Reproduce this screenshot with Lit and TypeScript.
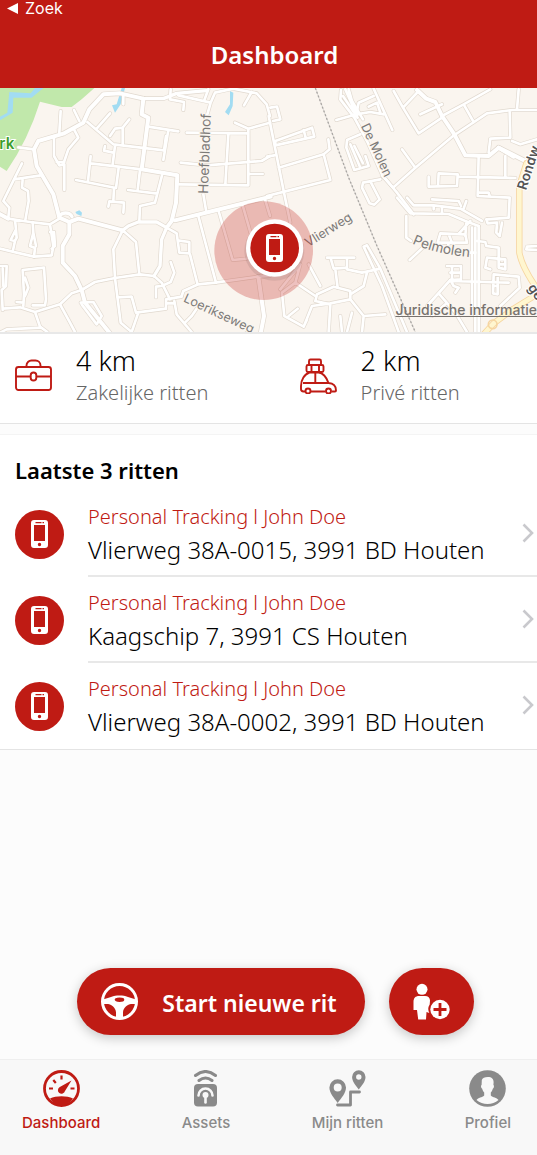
import { LitElement, html, css, svg } from "lit";
import { customElement, property } from "lit/decorators.js";

const RED = "#bf1b14";

// Street geometry, in map units. "East" paths belong to the eastern half of the town.
const minorWest = [
  "M182 75 L178 140 M162 150 L162 210 L178 238 L193 235 L193 312 M170 228 H193 M193 225 L205 190 L235 155 L222 130 M222 72 L238 105",
  "M330 82 L290 128 M262 108 L340 175 L492 193 M330 150 L345 128 L368 125 L388 100 M368 125 L368 175 M345 180 L338 235 M340 200 L312 194 L315 180",
  "M445 122 L535 136 M505 132 L490 222 M492 193 L498 150",
  "M425 250 L272 232 M272 210 L264 285 M228 282 L348 306 L356 245 M342 306 L340 345 M325 362 L328 346 L372 350 L370 380",
  "M413 312 L420 252 M384 312 L472 323 L486 268 M472 323 L465 350 L420 360 L418 405",
  "M66 232 L42 280 L10 345 L28 365 L25 395 M42 280 L122 268 M68 280 L66 305 L84 315 L86 345 L76 402",
  "M25 398 L90 408 L150 415 L178 398 M45 402 L48 430 L32 462 L45 465 L38 497 M48 430 L50 455 L45 465 M0 488 L50 500 L102 512 L155 508 L160 480 L150 415 M150 438 H162 L165 480 L155 488",
  "M98 408 L100 440 L90 480 L105 486 L102 512 M100 440 L108 480",
  "M0 540 H20 L18 600 L5 612 L8 672 M8 548 L10 600 M0 740 L20 730 L120 725 M8 668 L60 664 L105 678 L180 655 L215 622 L245 612 M105 678 L120 722 L142 738",
  "M70 660 L72 625 L68 552 L132 545 L138 640 L135 658 L98 658 M75 575 L85 605 L75 630 M50 648 L70 650 M180 655 L208 706 L225 738",
  "M242 650 L280 648 L305 690 L290 715 L245 655 M245 612 L285 588 L345 576 L420 565 L462 570 L485 590 L510 640",
  "M368 433 L340 490 L345 576 L362 710 L395 738 M368 433 L408 468 L418 565 M352 634 L395 632 L408 680 L498 668 L498 640 L545 632 M415 680 L395 738 M498 652 H520 M523 645 L530 685 L575 738 M555 710 L575 690 L590 668",
  "M545 630 L550 615 L595 595 L645 590 L775 572 L810 570 M468 634 L468 602 L485 600 L512 588 L523 560 L512 528",
  "M500 425 L530 442 L538 500 L568 502 L568 468 L538 464 M570 505 L592 592 M595 390 L640 560 L648 590 M655 372 L698 522 L740 518 M728 358 L760 470 M795 340 L810 390",
  "M538 295 L745 298 L745 128 L705 110 M560 140 L745 142 M745 128 L810 110 M685 145 L676 295 M542 230 L620 238 L785 225 L810 210 M745 264 H788 M610 325 L618 372",
  "M512 10 L510 40 L552 48 L550 72 M535 28 L632 50 L622 85 M612 45 L625 10 M632 50 L645 20 L700 8 L770 22 L800 55 L810 90 M732 58 L755 18 M55 184 L102 190 M370 28 V55",
];
const minorEast = [
  "M10 65 L30 62 L40 100 L18 105 M5 90 L52 325 L70 410 M0 212 L22 208 M35 245 L170 205 M25 165 L135 125 L142 152 L25 178 Z M110 132 L116 155",
  "M0 330 L55 316 L190 282 L170 205 L188 190 L184 160",
  "M208 102 L268 85 L310 78 L350 85 M268 85 L275 50 L320 30 M305 62 L330 50 L340 80 M320 8 L376 132 M380 15 L408 65 L455 142 L525 95 M408 65 L455 15",
  "M222 12 L220 40 L262 95 L300 165 L345 265 L390 320 L440 385 M245 10 L255 45 L288 100 M228 30 L272 95 M235 10 L270 88",
  "M280 145 L240 162 L238 185 L262 252 L305 240 L295 210 M262 180 L288 232 M250 175 L280 245",
  "M405 190 L445 245 L558 150 L660 82 L735 72 L810 72 M445 245 L378 305 L345 268 M340 280 L288 290 L285 305 L308 352 L322 356 L338 340 L312 290 M390 335 L430 382 L545 384 L595 405 L635 420",
  "M460 85 L525 55 M525 90 L590 55 L670 10 M590 55 L620 108 M755 10 L750 70 M728 78 L730 155 L670 158 L665 200",
  "M420 335 L440 358 L500 358 L580 368 L645 405 M500 370 L500 358 M525 384 L525 362 M495 340 L575 345 L582 360 M598 345 L590 368",
  "M485 272 V302 L570 300 L572 265 L515 262 L513 300 M572 272 L745 276 M635 210 L632 330 L728 335 L725 395 L662 400 M632 320 H665 L668 330 M715 210 V272",
  "M418 390 V455 L432 465 M428 522 L475 478 M590 445 L520 442 L512 470 L600 470 L595 445 M598 412 L595 450 M545 445 L555 470 M578 440 L610 405 M545 470 L540 500 M605 500 H625",
  "M658 400 L662 412 L690 410 L688 440 L698 450 L705 410 M630 465 L655 468 L658 480 L695 485 L695 545 L715 550 L715 520 L660 515 L655 545 L670 550 M700 535 H715",
  "M540 540 H582 V580 L550 582 L560 600 L575 605 L565 620 M555 540 V580 M550 560 H582 M550 585 L725 590 M680 565 L755 572 L758 605 L700 660 M680 565 L678 622 L692 625 L692 568 M680 600 H692",
  "M550 582 L480 660 M515 622 L565 680 L600 738 M495 690 L535 655 M810 480 L780 482 L778 490 L810 492",
  "M180 515 L262 515 M192 520 L200 548 L240 545 L240 515 M205 550 L212 605 M240 550 L285 560 L340 548 L300 478 L290 482 L345 600 L395 738 M300 560 L290 600 L250 625 M340 548 L420 738",
  "M40 610 L100 535 L85 590 L45 620 L52 690 L110 722 L135 660 L190 652 L250 640 L250 615 L200 602 L150 625 L145 645 L190 655 L185 738 M85 590 L145 630 M125 535 L160 600 M250 640 L290 690 L285 738 M290 690 L355 685 M65 690 L92 668 M220 690 L225 738 M110 722 L120 700 M255 680 L240 738",
  "M635 420 V738 M625 425 V738 M615 425 V660 M735 165 L760 175 L810 160",
];
const majorWest = [
  "M-5 382 L25 398",
  "M330 742 L255 650 L245 612 L225 570 L188 530 L188 480 L208 445 L208 408 L178 395 L160 325 L110 240 L102 190 L115 165 L190 143 L250 110 L268 70 L310 25 L360 22 L430 38",
  "M430 38 L425 85 L445 95 L425 250 L532 268 L528 350 L515 405 L500 425",
  "M525 403 L650 372 L812 332",
  "M208 408 L235 398 L368 433",
  "M775 572 L792 690 L782 742",
];
const midWest = ["M430 38 L490 38 L530 22 L620 14 M368 433 L385 420 L415 408 L470 408 L500 425 L485 460 L480 540 L462 570 M178 392 A20 16 0 0 1 216 392"];
const majorEast = ["M450 12 L478 38 L505 48 L525 90 L562 145 L595 208 L665 210 L695 185 L775 225", "M695 185 L740 212"];

const street = (d: string, w: number) => svg`<path d=${d} stroke="#e1d9cf" stroke-width=${w + 4}></path>`;
const fill = (d: string, w: number) => svg`<path d=${d} stroke="#fff" stroke-width=${w}></path>`;

const phone = svg`<path fill-rule="evenodd" d="M4 0h11a3 3 0 0 1 3 3v22a3 3 0 0 1-3 3H4a3 3 0 0 1-3-3V3a3 3 0 0 1 3-3zM4 5v16h11V5zM9.500 22.800a1.700 1.700 0 1 0 0 3.400a1.700 1.700 0 1 0 0-3.400zM5.500 2v1.200h6V2zM12.500 2v1.200h1.500V2z"></path>`;

const icons: Record<string, unknown> = {
  phone: svg`<svg viewBox="0 0 49 49" width="49" height="49"><circle cx="24.500" cy="24.500" r="24.500" fill=${RED}></circle><g transform="translate(15 10)" fill="#fff">${phone}</g></svg>`,
  briefcase: svg`<svg viewBox="0 0 37 37" width="37" height="37" fill="none" stroke=${RED} stroke-width="1.900"><rect x="1" y="10" width="35" height="23" rx="2.500"></rect><path d="M11.500 10V8.500a5 5 0 0 1 5-5h4a5 5 0 0 1 5 5V10M1 19.500h14.500M21.500 19.500H36"></path><rect x="15.700" y="15.500" width="5.600" height="8" rx="2.800"></rect></svg>`,
  car: svg`<svg viewBox="0 0 37 37" width="37" height="37" fill="none" stroke=${RED} stroke-width="1.900" stroke-linejoin="round"><path d="M9 7.500V4A1.500 1.500 0 0 1 10.500 2.500h9A1.500 1.500 0 0 1 21 4v3.500"></path><rect x="6.500" y="8" width="17" height="7" rx="1.500"></rect><path d="M11.500 8v7M19 8v7M5 34.500H3.500A2.500 2.500 0 0 1 1 32v-3c0-6 3.500-12 8.500-13.500h9c4 0 8 4.500 10 10.500 4.500.3 7.500 3 7.500 7.500 0 .6-.6 1-1 1h-3.500M11 34.500h14.500M3 26h25.500M15.300 15.500V26"></path><circle cx="8" cy="34" r="2.500"></circle><circle cx="28.500" cy="34" r="2.500"></circle></svg>`,
  wheel: svg`<svg viewBox="0 0 37 37" width="37" height="37"><circle cx="18.500" cy="18.500" r="17" fill="none" stroke="#fff" stroke-width="3"></circle><path fill="#fff" fill-rule="evenodd" d="M2 16.500l8-2.500c3-1.200 5-1.500 8.500-1.500s5.500.3 8.500 1.500l8 2.500v4.500h-5c-3 0-8 4-8 8.500V35h-7v-5.500c0-4.500-5-8.500-8-8.500H2zM18.500 14.500c-3.500 0-4.800 1-4.800 2.200s1.800 2.300 4.800 2.300 4.800-1 4.800-2.300-1.300-2.200-4.800-2.200z"></path></svg>`,
  passenger: svg`<svg viewBox="0 0 37 37" width="37" height="37" fill="#fff"><circle cx="9" cy="6.300" r="5.500"></circle><path d="M6 13h6c3.200 0 5 2 5 4.500l-.3 4c-2 3-1.700 6-.4 8.500L13.500 29 13 36.500H5.200L4 27H.5v-8C.5 15 2.500 13 6 13z"></path><circle cx="27" cy="26.500" r="9.700"></circle><path d="M27 20v13M20.500 26.500h13" stroke=${RED} stroke-width="2.800"></path></svg>`,
  gauge: svg`<svg viewBox="0 0 37 37" width="37" height="37"><circle cx="18.500" cy="18.500" r="17" fill="none" stroke=${RED} stroke-width="2.800"></circle><path d="M7 28.500C13 25.500 24 25.500 30 28.500 27 33 22 36 18.500 36S10 33 7 28.500zM28.500 10.500L22 21a3.600 3.600 0 1 1-5.200-4z" fill=${RED}></path><path d="M6 18.500h4M27.500 18.500h4M18.500 5.500v4M10.300 10l2.500 3" stroke=${RED} stroke-width="2.200"></path></svg>`,
  assets: svg`<svg viewBox="0 0 37 37" width="37" height="37" fill="none" stroke-linecap="round"><path d="M8.500 5.500Q18.500-2.500 28.500 5.500M12 10.500Q18.500 5.500 25 10.500" stroke="#8a8a8a" stroke-width="3"></path><rect x="7" y="14" width="23" height="22.500" rx="4" fill="#8a8a8a"></rect><path d="M11.500 25.500a7 7 0 0 1 14 0" stroke="#f8f8f8" stroke-width="2.600"></path><circle cx="18.500" cy="25" r="3" fill="#f8f8f8"></circle><path d="M18.500 26v6.500" stroke="#f8f8f8" stroke-width="2.600"></path></svg>`,
  trips: svg`<svg viewBox="0 0 37 37" width="37" height="37"><path d="M8.500 35h13V22h9" fill="none" stroke="#8a8a8a" stroke-width="2.800" stroke-linecap="round" stroke-linejoin="round"></path><path fill="#8a8a8a" fill-rule="evenodd" d="M8.700 9.200A8.300 8.300 0 0 0 .4 17.500C.4 23 5 28 8.700 33c3.700-5 8.300-10 8.300-15.500a8.300 8.300 0 0 0-8.300-8.300zm0 4.300a4 4 0 1 1 0 8 4 4 0 0 1 0-8zM29.800.3a6.700 6.700 0 0 0-6.700 6.700c0 4.500 3.700 8.500 6.700 12.500 3-4 6.700-8 6.700-12.500A6.700 6.700 0 0 0 29.800.3zm0 4a2.700 2.700 0 1 1 0 5.400 2.700 2.700 0 0 1 0-5.400z"></path></svg>`,
  profile: svg`<svg viewBox="0 0 37 37" width="37" height="37"><circle cx="18.500" cy="18.500" r="18.300" fill="#8a8a8a"></circle><path fill="#f8f8f8" d="M12.800 10c.5-2 3-3 6-3 4 0 6 2 5.800 5.500l-.2 2.500c1 .2.700 3-.6 3.800-.3 1.500-1 2.800-2 3.700v3c2 2 6 2 7.700 4.500-3 2.800-7 4-11 4s-8-1.200-11-4c1.700-2.500 5.700-2.500 7.700-4.500v-3c-1-.9-1.700-2.200-2-3.700-1.300-.8-1.600-3.600-.6-3.800z"></path></svg>`,
  chevron: svg`<svg viewBox="0 0 12 20" width="12" height="20"><path d="M1.500 1.500L10 10l-8.500 8.500" fill="none" stroke="#c9c9cd" stroke-width="2.600"></path></svg>`,
};

@customElement("trip-map")
class TripMap extends LitElement {
  static styles = css`
    :host { display: block; position: relative; overflow: hidden; height: 246px; border-bottom: 2px solid #e8e8e8; background: #faf5ef; }
    .map { display: block; width: 100%; height: 100%; }
    .label { font-family: Inter, "Liberation Sans", sans-serif; font-size: 38px; fill: #7c7a78; stroke: #faf5ef; stroke-width: 6px; paint-order: stroke; }
    .wide { font-size: 41px; }
    .strong { font-size: 41px; font-weight: 600; fill: #555; stroke: #fff; }
    .park { font-weight: 600; fill: #3b9d2c; stroke: #fff; font-size: 46px; }
    .legal { position: absolute; right: 0; bottom: 13px; font: 500 14px/18px Inter, "Liberation Sans", sans-serif; color: #77726e; text-decoration: underline; white-space: nowrap; }
  `;
  render() {
    return html`
      <svg class="map" viewBox="0 6 1611 732" preserveAspectRatio="xMidYMid slice" role="img" aria-label="Kaart van Houten">
        <path d="M0 0H290L245 40L215 63H185L120 47Q85 160 20 255L0 242Z" fill="#c1e8ab"></path>
        <path d="M0 92L22 80L28 18L92 22L105 6H130L95 35L40 35L38 80L0 103ZM365 6H375L362 55L345 80L336 58L350 55ZM690 15L700 20L698 60L686 88L675 78L690 55ZM226 378L238 373L246 380L244 390L230 384Z" fill="#a2dcf2"></path>
        <g fill="none" stroke-linejoin="round" stroke-linecap="round">
          ${minorWest.map((d) => street(d, 8))}${midWest.map((d) => street(d, 10))}
          <g transform="translate(801 0)">${minorEast.map((d) => street(d, 8))}${majorEast.map((d) => street(d, 12))}</g>
          ${majorWest.map((d) => street(d, 12))}
          ${minorWest.map((d) => fill(d, 8))}${midWest.map((d) => fill(d, 10))}${majorWest.map((d) => fill(d, 12))}
          <g transform="translate(801 0)">
            ${minorEast.map((d) => fill(d, 8))}${majorEast.map((d) => fill(d, 12))}
            <path d="M778 232L757 300V500Q765 545 815 615M815 622L740 668L680 712L650 745" stroke="#f6d5a0" stroke-width="19"></path>
            <path d="M778 232L757 300V500Q765 545 815 615M815 622L740 668L680 712L650 745" stroke="#fff6cf" stroke-width="14"></path>
            <circle cx="677" cy="715" r="13" stroke="#f6d5a0" stroke-width="5"></circle>
            <path d="M145 6L245 275L330 480L448 745" stroke="#dedad6" stroke-width="3"></path>
            <path d="M145 6L245 275L330 480L448 745" stroke="#a9a6a3" stroke-width="4" stroke-dasharray="6 6" stroke-linecap="butt"></path>
          </g>
        </g>
        <path id="pelmolen" d="M1236 472 Q1310 506 1420 514" fill="none"></path>
        <text class="label wide" transform="translate(624 324) rotate(-88)">Hoefbladhof</text>
        <text class="label" transform="translate(1082 120) rotate(65)">De Molen</text>
        <text class="label" transform="translate(925 484) rotate(-32)">Vlierweg</text>
        <text class="label" transform="translate(548 646) rotate(25)">Loerikseweg</text>
        <text class="label wide"><textPath href="#pelmolen">Pelmolen</textPath></text>
        <text class="label strong" transform="translate(1578 314) rotate(-72)">Rondw</text>
        <text class="label strong" transform="translate(1582 605) rotate(55)">ge</text>
        <text class="label park" x="-2" y="189">rk</text>
        <circle cx="791" cy="494" r="148" fill=${RED} fill-opacity=".27"></circle>
        <circle cx="823" cy="494" r="90" fill="#000" fill-opacity=".08"></circle>
        <circle cx="824" cy="486" r="86" fill="#fff"></circle>
        <circle cx="824" cy="486" r="73" fill=${RED}></circle>
        <g transform="translate(795 444) scale(3)" fill="#fff">${phone}</g>
      </svg>
      <a class="legal" href="#legal">Juridische informatie</a>
    `;
  }
}

@customElement("trip-row")
class TripRow extends LitElement {
  @property() who = "";
  @property() address = "";
  static styles = css`
    :host { display: block; }
    :host(:last-child) .body { border-bottom-color: transparent; }
    .row { display: flex; align-items: center; gap: 24px; padding-left: 15px; color: inherit; text-decoration: none; }
    .avatar { display: flex; flex: none; }
    .body { flex: 1; display: flex; align-items: center; justify-content: space-between; padding: 9px 3px 9px 0; border-bottom: 2px solid #e8e8e8; min-width: 0; }
    .who { font-size: 20px; line-height: 34px; font-weight: 350; color: #bf1b14; }
    .address { font-size: 24px; line-height: 32px; font-weight: 360; color: #000; white-space: nowrap; }
    .next { display: flex; flex: none; }
  `;
  render() {
    return html`<a class="row" href="#rit">
      <span class="avatar">${icons.phone}</span>
      <div class="body">
        <div><div class="who">${this.who}</div><div class="address">${this.address}</div></div>
        <span class="next">${icons.chevron}</span>
      </div>
    </a>`;
  }
}

@customElement("app-root")
class AppRoot extends LitElement {
  static styles = css`
    :host { display: flex; flex-direction: column; min-height: 100vh; background: #fcfcfc; color: #000; font-family: "Noto Sans", "Open Sans", sans-serif; }
    * { box-sizing: border-box; }
    svg { display: block; }
    .header { background: #bf1b14; color: #fff; height: 88px; display: flex; flex-direction: column; }
    .back { align-self: flex-start; display: flex; align-items: center; gap: 7px; padding: 0 7px; color: #fff; text-decoration: none; font: 400 16px/16px Inter, sans-serif; }
    .title { margin: 0; padding: 21px 0 0 12px; text-align: center; font-size: 24px; line-height: 36px; font-weight: 600; }
    .stats { display: grid; grid-template-columns: 53fr 47fr; background: #fff; border-bottom: 1px solid #e4e4e4; padding: 9px 0 16px; }
    .stat { display: flex; align-items: center; gap: 24px; padding-left: 15px; }
    .value { font-size: 27px; line-height: 36px; font-weight: 360; }
    .caption { font-size: 20px; line-height: 28px; font-weight: 350; color: #666; }
    .trips { margin-top: 10px; background: #fff; border-top: 1px solid #f4f4f4; border-bottom: 1px solid #e4e4e4; }
    .heading { margin: 0; padding: 18px 15px 4px; font-size: 22px; line-height: 34px; font-weight: 600; }
    .actions { margin-top: auto; padding: 24px 0 24px 14px; display: flex; justify-content: center; gap: 24px; }
    .action { display: flex; align-items: center; justify-content: center; gap: 24px; height: 67px; padding: 0 24px; border: 0; border-radius: 34px; background: #bf1b14; color: #fff; font: 600 23px/34px "Noto Sans", sans-serif; box-shadow: 0 3px 12px rgba(0, 0, 0, 0.22); }
    .primary { padding-right: 28px; }
    .action span { padding-top: 2px; }
    .tabs { display: flex; justify-content: space-between; padding: 10px 26px 22px 22px; background: #f8f8f8; border-top: 1px solid #efefef; }
    .tab { display: flex; flex-direction: column; align-items: center; gap: 6px; color: #8a8a8a; text-decoration: none; font: 500 15px/20px Inter, "Liberation Sans", sans-serif; }
    .current { color: #bf1b14; }
  `;
  render() {
    return html`
      <header class="header">
        <a class="back" href="#zoek"><svg viewBox="0 0 11 11" width="11" height="11" fill="#fff"><path d="M0 5.500L11 0v11z"></path></svg>Zoek</a>
        <h1 class="title">Dashboard</h1>
      </header>
      <trip-map></trip-map>
      <section class="stats">
        <div class="stat">${icons.briefcase}<div><div class="value">4 km</div><div class="caption">Zakelijke ritten</div></div></div>
        <div class="stat">${icons.car}<div><div class="value">2 km</div><div class="caption">Privé ritten</div></div></div>
      </section>
      <section class="trips">
        <h2 class="heading">Laatste 3 ritten</h2>
        <div>
          <trip-row who="Personal Tracking l John Doe" address="Vlierweg 38A-0015, 3991 BD Houten"></trip-row>
          <trip-row who="Personal Tracking l John Doe" address="Kaagschip 7, 3991 CS Houten"></trip-row>
          <trip-row who="Personal Tracking l John Doe" address="Vlierweg 38A-0002, 3991 BD Houten"></trip-row>
        </div>
      </section>
      <div class="actions">
        <button class="action primary" type="button">${icons.wheel}<span>Start nieuwe rit</span></button>
        <button class="action" type="button" aria-label="Passagier toevoegen">${icons.passenger}</button>
      </div>
      <nav class="tabs">
        <a class="tab current" href="#dashboard">${icons.gauge}<span>Dashboard</span></a>
        <a class="tab" href="#assets">${icons.assets}<span>Assets</span></a>
        <a class="tab" href="#ritten">${icons.trips}<span>Mijn ritten</span></a>
        <a class="tab" href="#profiel">${icons.profile}<span>Profiel</span></a>
      </nav>
    `;
  }
}
